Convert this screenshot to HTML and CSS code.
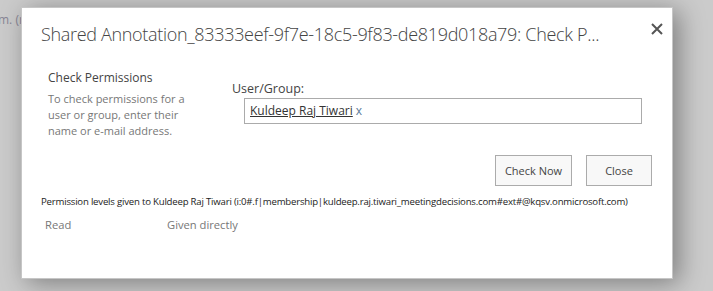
FILE: index.html
```html
<!DOCTYPE html>
<html lang="en">
<head>
<meta charset="utf-8">
<title>Check Permissions</title>
<link rel="stylesheet" href="styles.css">
</head>
<body>
<div class="page-text">m. (r</div>
<div class="overlay"></div>
<div class="dialog" role="dialog">
  <div class="dlg-header">
    <h1 class="dlg-title">Shared Annotation_83333eef-9f7e-18c5-9f83-de819d018a79: Check P...</h1>
    <button class="dlg-close" aria-label="Close">
      <svg width="12" height="12" viewBox="0 0 12 12"><path d="M1 1 L11 11 M11 1 L1 11" stroke="#555" stroke-width="2" fill="none"/></svg>
    </button>
  </div>
  <div class="dlg-body">
    <div class="section">
      <div class="section-desc">
        <h2 class="section-head">Check Permissions</h2>
        <p class="section-text">To check permissions for a user or group, enter their name or e-mail address.</p>
      </div>
      <div class="section-field">
        <label class="field-label">User/Group:</label>
        <div class="picker"><span class="entity">Kuldeep Raj Tiwari</span><span class="remove">x</span></div>
      </div>
    </div>
    <div class="buttons">
      <button class="btn btn-check">Check Now</button>
      <button class="btn btn-close">Close</button>
    </div>
    <div class="result-title">Permission levels given to Kuldeep Raj Tiwari (i:0#.f|membership|kuldeep.raj.tiwari_meetingdecisions.com#ext#@kqsv.onmicrosoft.com)</div>
    <div class="result-row"><span class="perm">Read</span><span class="how">Given directly</span></div>
  </div>
</div>
</body>
</html>
```
FILE: styles.css
```css
html, body {
  margin: 0;
  padding: 0;
}
body {
  width: 713px;
  height: 291px;
  overflow: hidden;
  position: relative;
  background: #d3d3d3;
  font-family: "Open Sans", "Noto Sans", sans-serif;
}
.page-text {
  padding: 11px 0 0 0;
  margin-left: -2px;
  font-size: 12px;
  color: #6b6880;
  white-space: nowrap;
}
.overlay {
  position: absolute;
  inset: 0;
  background: rgba(190, 190, 190, 0.35);
}
.dialog {
  position: absolute;
  left: 21px;
  top: 7px;
  width: 652px;
  height: 272px;
  background: #fff;
  border: 1px solid #c6c6c6;
  box-shadow: 6px 4px 24px rgba(0, 0, 0, 0.38);
  box-sizing: border-box;
  color: #444;
}
.dlg-header {
  display: flex;
  align-items: flex-start;
  justify-content: space-between;
  padding: 13px 8px 0 19px;
}
.dlg-title {
  margin: 0;
  font-size: 18px;
  letter-spacing: -0.32px;
  font-weight: 300;
  line-height: 26px;
  color: #444;
  white-space: nowrap;
}
.dlg-close {
  border: 0;
  background: none;
  padding: 0;
  margin-top: 1px;
  width: 14px;
  height: 14px;
  display: flex;
  align-items: center;
  justify-content: center;
}
.dlg-body {
  padding: 0 20px 0 19px;
}
.section {
  display: flex;
  padding: 22px 0 0 7px;
}
.section-desc {
  width: 184px;
}
.section-head {
  margin: 0;
  font-size: 12px;
  font-weight: 400;
  line-height: 17px;
  color: #444;
}
.section-text {
  margin: 5px 0 0 0;
  font-size: 11px;
  line-height: 16px;
  color: #777;
  width: 140px;
}
.section-field {
  display: flex;
  flex-direction: column;
  padding-top: 11px;
}
.field-label {
  font-size: 12.5px;
  line-height: 17px;
  color: #444;
}
.picker {
  margin: 1px 0 0 12px;
  width: 398px;
  height: 26px;
  box-sizing: border-box;
  border: 1px solid #ababab;
  padding: 2px 5px;
  font-size: 12px;
  line-height: 19px;
  display: flex;
  gap: 3px;
}
.entity {
  color: #333;
  text-decoration: underline;
}
.remove {
  color: #5a7a98;
}
.buttons {
  display: flex;
  justify-content: flex-end;
  gap: 14px;
  margin-top: 16px;
}
.btn {
  height: 31px;
  box-sizing: border-box;
  border: 1px solid #ababab;
  background: #f8f8f8;
  font-family: inherit;
  font-size: 11px;
  color: #444;
  padding: 0;
  white-space: nowrap;
}
.btn-check {
  width: 77px;
}
.btn-close {
  width: 66px;
}
.result-title {
  margin-top: 9px;
  font-size: 9.6px;
  letter-spacing: -0.2px;
  line-height: 14px;
  color: #222;
  white-space: nowrap;
}
.result-row {
  display: flex;
  padding: 8px 0 0 4px;
  font-size: 11.2px;
  line-height: 16px;
  color: #777;
}
.perm {
  width: 122px;
}
```
